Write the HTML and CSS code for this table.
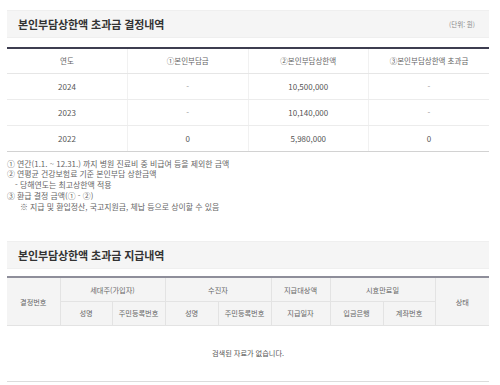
FILE: index.html
```html
<!DOCTYPE html>
<html lang="ko">
<head>
<meta charset="utf-8">
<link rel="stylesheet" href="styles.css">
</head>
<body>
<div class="page">
  <div class="titlebox">
    <h2 class="title">본인부담상한액 초과금 결정내역</h2>
    <span class="unit">(단위: 원)</span>
  </div>
  <table class="t1">
    <colgroup><col class="c1"><col class="c1"><col class="c1"><col class="c1"></colgroup>
    <thead>
      <tr><th>연도</th><th>①본인부담금</th><th>②본인부담상한액</th><th>③본인부담상한액 초과금</th></tr>
    </thead>
    <tbody>
      <tr><td>2024</td><td class="dash">-</td><td>10,500,000</td><td class="dash">-</td></tr>
      <tr><td>2023</td><td class="dash">-</td><td>10,140,000</td><td class="dash">-</td></tr>
      <tr class="last"><td>2022</td><td>0</td><td>5,980,000</td><td>0</td></tr>
    </tbody>
  </table>
  <ul class="notes">
    <li>① 연간(1.1. ~ 12.31.) 까지 병원 진료비 중 비급여 등을 제외한 금액</li>
    <li>② 연평균 건강보험료 기준 본인부담 상한금액</li>
    <li class="sub">- 당해연도는 최고상한액 적용</li>
    <li>③ 환급 결정 금액(① - ②)</li>
    <li class="sub2">※ 지급 및 환입정산, 국고지원금, 체납 등으로 상이할 수 있음</li>
  </ul>

  <div class="titlebox second">
    <h2 class="title">본인부담상한액 초과금 지급내역</h2>
  </div>
  <table class="t2">
    <colgroup>
      <col style="width:53px"><col style="width:52px"><col style="width:53px"><col style="width:53px"><col style="width:53px"><col style="width:59px"><col style="width:53px"><col style="width:52px"><col style="width:54px">
    </colgroup>
    <thead>
      <tr class="r1">
        <th rowspan="2">결정번호</th>
        <th colspan="2">세대주(가입자)</th>
        <th colspan="2">수진자</th>
        <th>지급대상액</th>
        <th colspan="2">시효만료일</th>
        <th rowspan="2" class="lastcol">상태</th>
      </tr>
      <tr class="r2">
        <th>성명</th><th>주민등록번호</th><th>성명</th><th>주민등록번호</th><th>지급일자</th><th>입금은행</th><th>계좌번호</th>
      </tr>
    </thead>
    <tbody>
      <tr class="empty"><td colspan="9">검색된 자료가 없습니다.</td></tr>
    </tbody>
  </table>
</div>
</body>
</html>
```

FILE: styles.css
```css
* { box-sizing: border-box; }
html, body { margin: 0; padding: 0; background: #fff; }
body {
  font-family: "Noto Sans CJK KR", "Noto Sans", sans-serif;
  color: #555;
}
.page {
  width: 489px;
  padding: 10px 0 0 7px;
}
.titlebox {
  height: 28px;
  background: #f5f5f5;
  border-top: 1px solid #efefef;
  border-bottom: 1px solid #efefef;
  display: flex;
  align-items: center;
  justify-content: space-between;
  padding: 0 14px 0 11px;
}
.title {
  margin: 0;
  font-size: 11px;
  font-weight: 700;
  color: #333;
  letter-spacing: -0.1px;
}
.unit {
  font-size: 6.5px;
  color: #888;
}
table {
  width: 482px;
  border-collapse: collapse;
  table-layout: fixed;
}
.t1 {
  margin-top: 9px;
  border-top: 2px solid #3d3d50;
}
.t1 th {
  height: 25px;
  font-size: 7.5px;
  font-weight: 400;
  color: #666;
  border-bottom: 1px solid #e6e6e6;
  border-left: 1px solid #f1f1f1;
  padding: 0;
}
.t1 td {
  height: 26px;
  font-size: 8px;
  color: #555;
  text-align: center;
  border-bottom: 1px solid #ececec;
  border-left: 1px solid #f1f1f1;
  padding: 0;
}
.t1 th:first-child, .t1 td:first-child { border-left: none; }
.t1 td.dash { color: #999; }
.t1 tr.last td { border-bottom: 1px solid #d2d2d2; }
.notes {
  list-style: none;
  margin: 7px 0 0;
  padding: 0;
  font-size: 7.9px;
  line-height: 10.8px;
  color: #666;
}
.notes .sub { padding-left: 8px; }
.notes .sub2 { padding-left: 13px; }
.titlebox.second { margin-top: 29px; }
.t2 {
  margin-top: 7px;
  border-top: 2px solid #8e8e9a;
}
.t2 th {
  background: #f4f4f4;
  font-size: 7.2px;
  font-weight: 400;
  color: #666;
  border: 1px solid #e3e3e3;
  border-top: none;
  padding: 0;
}
.t2 thead th:first-child { border-left: none; }
.t2 th.lastcol { border-right: none; }
.t2 .r1 th { height: 24px; }
.t2 .r2 th { height: 24px; }
.t2 td {
  height: 56px;
  text-align: center;
  font-size: 7.2px;
  color: #555;
  border-bottom: 1px solid #dcdcdc;
  padding: 0;
}
```
